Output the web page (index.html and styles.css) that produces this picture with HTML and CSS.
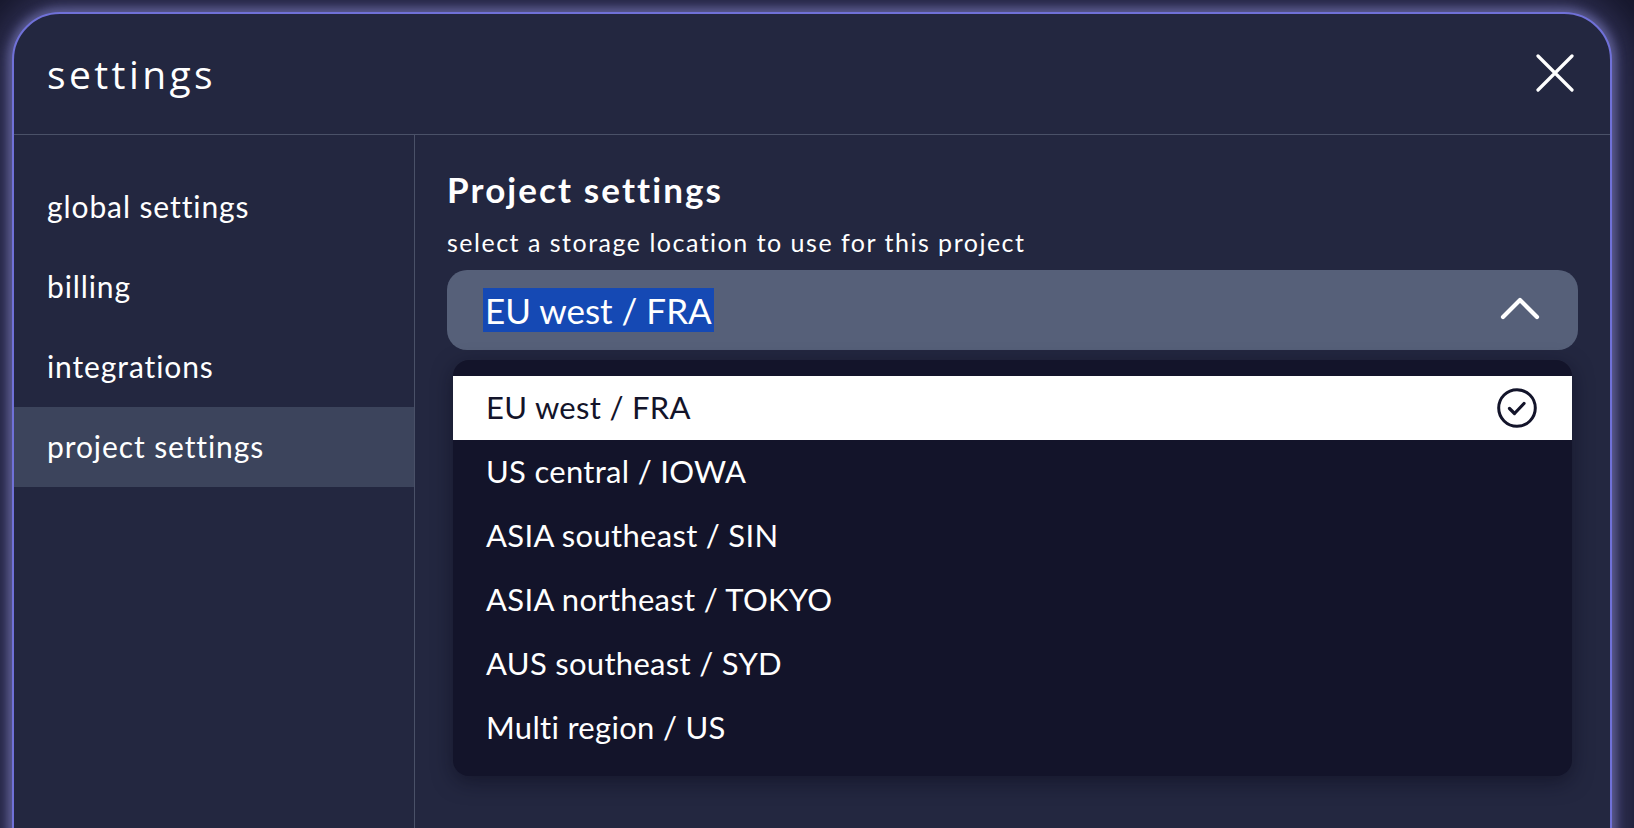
FILE: index.html
```html
<!DOCTYPE html>
<html lang="en">
<head>
<meta charset="utf-8">
<title>settings</title>
<link rel="stylesheet" href="styles.css">
</head>
<body>
<div class="modal">
  <header class="modal-header">
    <h1 class="modal-title">settings</h1>
    <button class="close-btn" aria-label="close">
      <svg width="38" height="38" viewBox="0 0 38 38"><path d="M2 2 L36 36 M36 2 L2 36" stroke="#fff" stroke-width="3.2" stroke-linecap="round" fill="none"/></svg>
    </button>
  </header>
  <div class="modal-body">
    <nav class="sidebar">
      <div class="nav-item">global settings</div>
      <div class="nav-item">billing</div>
      <div class="nav-item">integrations</div>
      <div class="nav-item active">project settings</div>
    </nav>
    <main class="content">
      <h2 class="section-title">Project settings</h2>
      <p class="section-sub">select a storage location to use for this project</p>
      <div class="select">
        <div class="select-trigger">
          <span class="select-value">EU west / FRA</span>
          <svg class="chevron" width="40" height="26" viewBox="0 0 40 26"><path d="M3 22 L20 5 L37 22" stroke="#fff" stroke-width="4.2" stroke-linecap="round" stroke-linejoin="round" fill="none"/></svg>
        </div>
        <ul class="select-list">
          <li class="option selected">
            <span>EU west / FRA</span>
            <svg width="42" height="42" viewBox="0 0 42 42"><circle cx="21" cy="21" r="18.3" stroke="#13142a" stroke-width="3" fill="none"/><path d="M13.5 21.5 L18.5 26.5 L28 16.5" stroke="#13142a" stroke-width="3.2" stroke-linecap="round" stroke-linejoin="round" fill="none"/></svg>
          </li>
          <li class="option">US central / IOWA</li>
          <li class="option">ASIA southeast / SIN</li>
          <li class="option">ASIA northeast / TOKYO</li>
          <li class="option">AUS southeast / SYD</li>
          <li class="option">Multi region / US</li>
        </ul>
      </div>
    </main>
  </div>
</div>
</body>
</html>
```
FILE: styles.css
```css
* { box-sizing: border-box; }
html, body { margin: 0; height: 100%; }
body {
  width: 1634px;
  height: 828px;
  overflow: hidden;
  background: #15162a;
  padding: 12px 22px 0 12px;
  font-family: Lato, "Noto Sans", sans-serif;
  color: #ffffff;
}
.modal {
  width: 1600px;
  height: 900px;
  background: #232740;
  border: 2px solid #7071d8;
  border-radius: 48px;
  box-shadow: 0 0 10px 4px rgba(110, 110, 170, 0.75), 0 0 40px 14px rgba(90, 90, 150, 0.55);
  display: flex;
  flex-direction: column;
  overflow: hidden;
}
.modal-header {
  height: 121px;
  flex: none;
  border-bottom: 1px solid #4a5168;
  display: flex;
  align-items: center;
  justify-content: space-between;
  padding: 0 36px 0 33px;
}
.modal-title {
  margin: 0;
  font-family: "Open Sans", sans-serif;
  font-weight: 400;
  font-size: 39px;
  letter-spacing: 3.4px;
  padding-bottom: 2px;
}
.close-btn {
  background: none;
  border: 0;
  padding: 0;
  display: flex;
  margin-bottom: 2px;
}
.modal-body {
  flex: 1;
  display: flex;
}
.sidebar {
  width: 401px;
  flex: none;
  border-right: 1px solid #4a5168;
  padding-top: 32px;
}
.nav-item {
  height: 80px;
  display: flex;
  align-items: center;
  padding-left: 33px;
  font-size: 30px;
  letter-spacing: 0.9px;
  padding-bottom: 3px;
}
.nav-item.active { background: #3c445c; }
.content {
  flex: 1;
  padding: 32px 32px 0 32px;
}
.section-title {
  margin: 0;
  font-size: 35px;
  font-weight: 700;
  letter-spacing: 2.1px;
  line-height: 44px;
}
.section-sub {
  margin: 15px 0 0;
  font-size: 25px;
  letter-spacing: 1.5px;
  line-height: 32px;
}
.select { margin-top: 12px; }
.select-trigger {
  height: 80px;
  background: #566079;
  border-radius: 20px;
  display: flex;
  align-items: center;
  justify-content: space-between;
  padding: 0 38px 0 36px;
}
.select-value {
  background: #1549b4;
  font-size: 35px;
  line-height: 44px;
  padding: 0 2px;
}
.chevron { margin-top: -4px; }
.select-list {
  list-style: none;
  margin: 10px 6px 0 6px;
  padding: 16px 0;
  background: #13142a;
  border-radius: 16px;
  box-shadow: 0 6px 20px rgba(10, 10, 25, 0.5);
}
.option {
  height: 64px;
  display: flex;
  align-items: center;
  justify-content: space-between;
  padding: 0 34px 0 33px;
  font-size: 31px;
  letter-spacing: 0.3px;
  padding-bottom: 3px;
}
.option.selected {
  background: #ffffff;
  color: #13142a;
}
.option svg { margin-top: 2px; }
```
